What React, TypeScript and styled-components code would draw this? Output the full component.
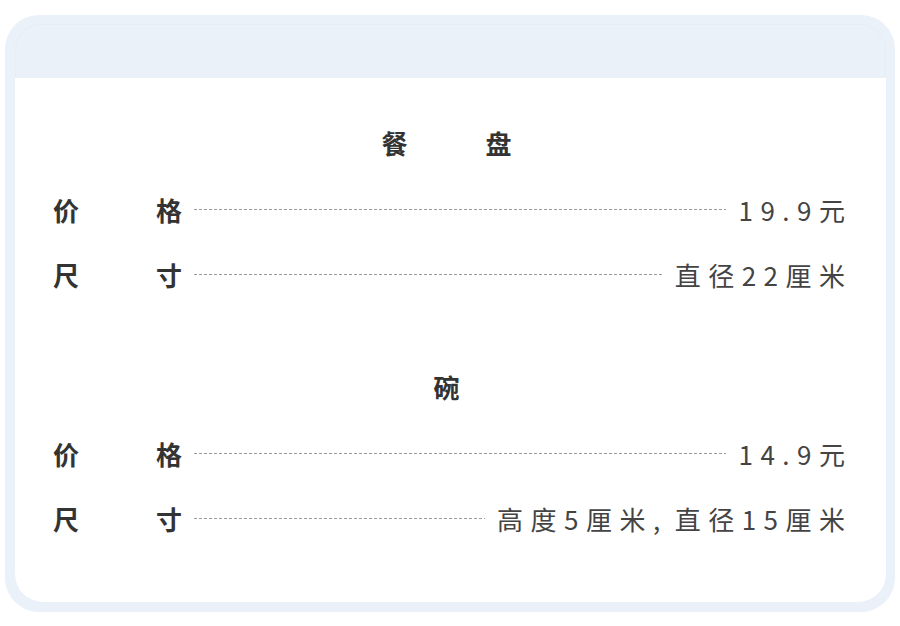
import React from "react";
import styled, { createGlobalStyle } from "styled-components";

const Global = createGlobalStyle`
  html, body { margin: 0; padding: 0; background: #ffffff; }
  body { font-family: "Noto Sans CJK SC", "Noto Sans", sans-serif; }
`;

const Card = styled.div`
  box-sizing: border-box;
  width: 890px;
  height: 597px;
  margin: 15px 0 0 5px;
  background: #eaf1f9;
  border-radius: 34px;
  padding: 0 9px 10px 10px;
  display: flex;
  flex-direction: column;
`;

const Header = styled.div`
  box-sizing: border-box;
  height: 54px;
  margin-top: 9px;
  flex: none;
  border: 1px solid #e5edf7;
  border-bottom: none;
  border-radius: 26px 26px 0 0;
`;

const Panel = styled.div`
  flex: 1;
  background: #ffffff;
  border-radius: 0 0 28px 28px;
  padding: 47px 41px 0 38px;
  display: flex;
  flex-direction: column;
`;

const Section = styled.section<{ $gapTop?: number }>`
  display: flex;
  flex-direction: column;
  margin-top: ${(p) => p.$gapTop ?? 0}px;
`;

const Title = styled.h2`
  margin: 0 0 16px;
  padding-right: 5px;
  display: flex;
  justify-content: center;
  font-size: 26px;
  line-height: 36px;
  font-weight: 700;
  color: #333333;
`;

const TitleSpread = styled.span<{ $width: number }>`
  display: flex;
  justify-content: space-between;
  width: ${(p) => p.$width}px;
`;

const Row = styled.div`
  height: 65px;
  display: flex;
  align-items: center;
  gap: 12px;
`;

const Label = styled.span`
  flex: none;
  width: 129px;
  display: flex;
  justify-content: space-between;
  font-size: 26px;
  font-weight: 700;
  color: #333333;
  line-height: 36px;
`;

const Leader = styled.span`
  flex: 1;
  height: 1px;
  margin-top: -1px;
  background: repeating-linear-gradient(
    to right,
    #9a9a9a 0 3px,
    transparent 3px 5px
  );
`;

const Value = styled.span`
  flex: none;
  font-size: 26px;
  font-weight: 400;
  color: #444444;
  letter-spacing: 7.5px;
  line-height: 36px;
  margin-right: -7.5px;
`;

const Comma = styled.span`
  margin-right: 7px;
`;

type Item = { label: [string, string]; value: string };
type Group = { title: string[]; titleWidth: number; items: Item[] };

const groups: Group[] = [
  {
    title: ["餐", "盘"],
    titleWidth: 130,
    items: [
      { label: ["价", "格"], value: "19.9元" },
      { label: ["尺", "寸"], value: "直径22厘米" },
    ],
  },
  {
    title: ["碗"],
    titleWidth: 26,
    items: [
      { label: ["价", "格"], value: "14.9元" },
      { label: ["尺", "寸"], value: "高度5厘米,直径15厘米" },
    ],
  },
];

function renderValue(v: string) {
  const parts = v.split(",");
  return parts.map((p, i) => (
    <React.Fragment key={i}>
      {p}
      {i < parts.length - 1 && <Comma>,</Comma>}
    </React.Fragment>
  ));
}

export default function App() {
  return (
    <>
      <Global />
      <Card>
        <Header />
        <Panel>
          {groups.map((g, gi) => (
            <Section key={gi} $gapTop={gi === 0 ? 0 : 62}>
              <Title>
                <TitleSpread $width={g.titleWidth}>
                  {g.title.map((c) => (
                    <span key={c}>{c}</span>
                  ))}
                </TitleSpread>
              </Title>
              {g.items.map((it, ii) => (
                <Row key={ii}>
                  <Label>
                    <span>{it.label[0]}</span>
                    <span>{it.label[1]}</span>
                  </Label>
                  <Leader />
                  <Value>{renderValue(it.value)}</Value>
                </Row>
              ))}
            </Section>
          ))}
        </Panel>
      </Card>
    </>
  );
}
